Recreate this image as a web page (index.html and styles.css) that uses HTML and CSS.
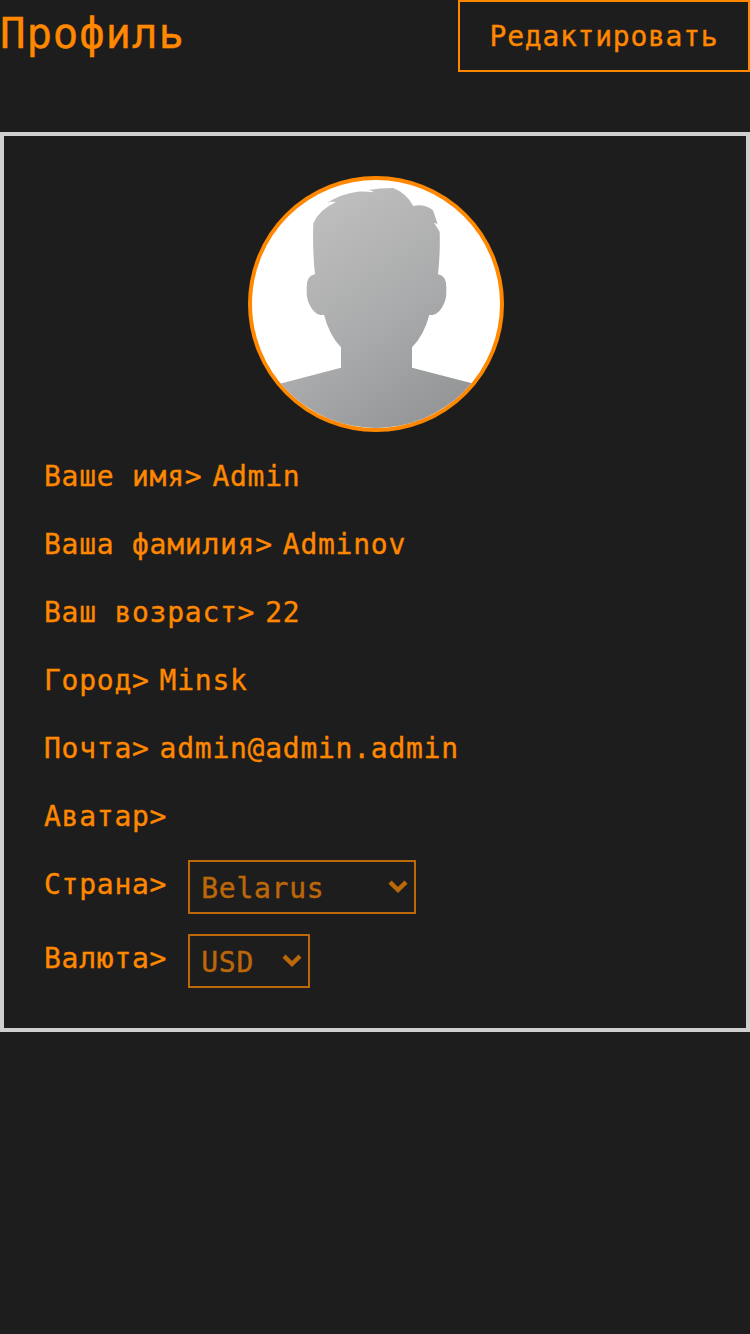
FILE: index.html
```html
<!DOCTYPE html>
<html lang="ru">
<head>
<meta charset="utf-8">
<title>Профиль</title>
<link rel="stylesheet" href="styles.css">
</head>
<body>
<header class="header">
  <h1 class="title">Профиль</h1>
  <button class="edit" type="button">Редактировать</button>
</header>
<main class="card">
  <div class="avatar">
    <svg class="avatar-image" viewBox="36 30 744 744" aria-hidden="true">
      <defs>
        <linearGradient id="shade" gradientUnits="userSpaceOnUse" x1="180" y1="120" x2="620" y2="760">
          <stop offset="0" stop-color="#bfbfbf"/>
          <stop offset="0.55" stop-color="#a9aaab"/>
          <stop offset="1" stop-color="#929394"/>
        </linearGradient>
      </defs>
      <path fill="url(#shade)" d="M20 667 L303 593 V532 Q267 494 252 434 C228 442 200 404 200 368 V352 Q200 316 225 313 Q217 240 220 160 Q236 120 288 96 Q276 94 262 98 Q305 71 352 65 Q378 64 402 67 Q396 61 385 60 Q420 54 460 54 Q500 70 520 108 Q552 100 579 121 L593 162 L582 158 L599 185 Q601 250 594 313 Q619 316 619 352 V368 C619 404 592 442 568 434 Q553 494 516 532 V593 L800 667 V790 H20 Z"/>
    </svg>
  </div>
  <div class="row"><span>Ваше имя&gt;</span><span>Admin</span></div>
  <div class="row"><span>Ваша фамилия&gt;</span><span>Adminov</span></div>
  <div class="row"><span>Ваш возраст&gt;</span><span>22</span></div>
  <div class="row"><span>Город&gt;</span><span>Minsk</span></div>
  <div class="row"><span>Почта&gt;</span><span>admin@admin.admin</span></div>
  <div class="row"><span>Аватар&gt;</span></div>
  <div class="row row-select">
    <span>Страна&gt;</span>
    <div class="select select-country"><span>Belarus</span><svg class="chevron" viewBox="0 0 20 14"><path d="M2 2.2 L10 10 L18 2.2"/></svg></div>
  </div>
  <div class="row row-select">
    <span>Валюта&gt;</span>
    <div class="select select-currency"><span>USD</span><svg class="chevron" viewBox="0 0 20 14"><path d="M2 2.2 L10 10 L18 2.2"/></svg></div>
  </div>
</main>
</body>
</html>
```
FILE: styles.css
```css
* { box-sizing: border-box; }

body {
  margin: 0;
  min-height: 100vh;
  background: #1d1d1d;
  color: #ff8800;
  font-family: Consolas, "DejaVu Sans Mono", monospace;
  font-size: 28px;
  letter-spacing: 0.742px;
  -webkit-text-stroke: 0.35px currentColor;
}

.header {
  display: flex;
  justify-content: space-between;
  align-items: flex-start;
  height: 72px;
  margin-bottom: 60px;
}

.title {
  margin: 0;
  font-size: 42.5px;
  font-weight: 400;
  line-height: 67px;
  letter-spacing: 0.81px;
}

.edit {
  width: 292px;
  height: 72px;
  padding: 0;
  border: 2px solid #ff8800;
  background: transparent;
  color: inherit;
  font: inherit;
  letter-spacing: inherit;
}

.card {
  display: flex;
  flex-direction: column;
  gap: 20px;
  height: 900px;
  padding: 40px;
  border: 4px solid #cfcfcf;
}

.avatar {
  width: 256px;
  height: 256px;
  margin-left: 204px;
  overflow: hidden;
  border: 4px solid #ff8800;
  border-radius: 50%;
  background: #fff;
}

.avatar-image {
  display: block;
  width: 248px;
  height: 248px;
}

.row {
  display: flex;
  gap: 10px;
  height: 48px;
  line-height: 50px;
  white-space: pre;
}

.row-select {
  gap: 21px;
  height: 54px;
}

.select {
  display: flex;
  justify-content: space-between;
  height: 54px;
  padding: 2px 6px 0 11px;
  border: 2px solid #ff8800;
  opacity: 0.7;
}

.select-country { width: 228px; }
.select-currency { width: 122px; }

.chevron {
  width: 20px;
  height: 14px;
  margin-top: 16px;
  fill: none;
  stroke: currentColor;
  stroke-width: 4.4;
}
```
